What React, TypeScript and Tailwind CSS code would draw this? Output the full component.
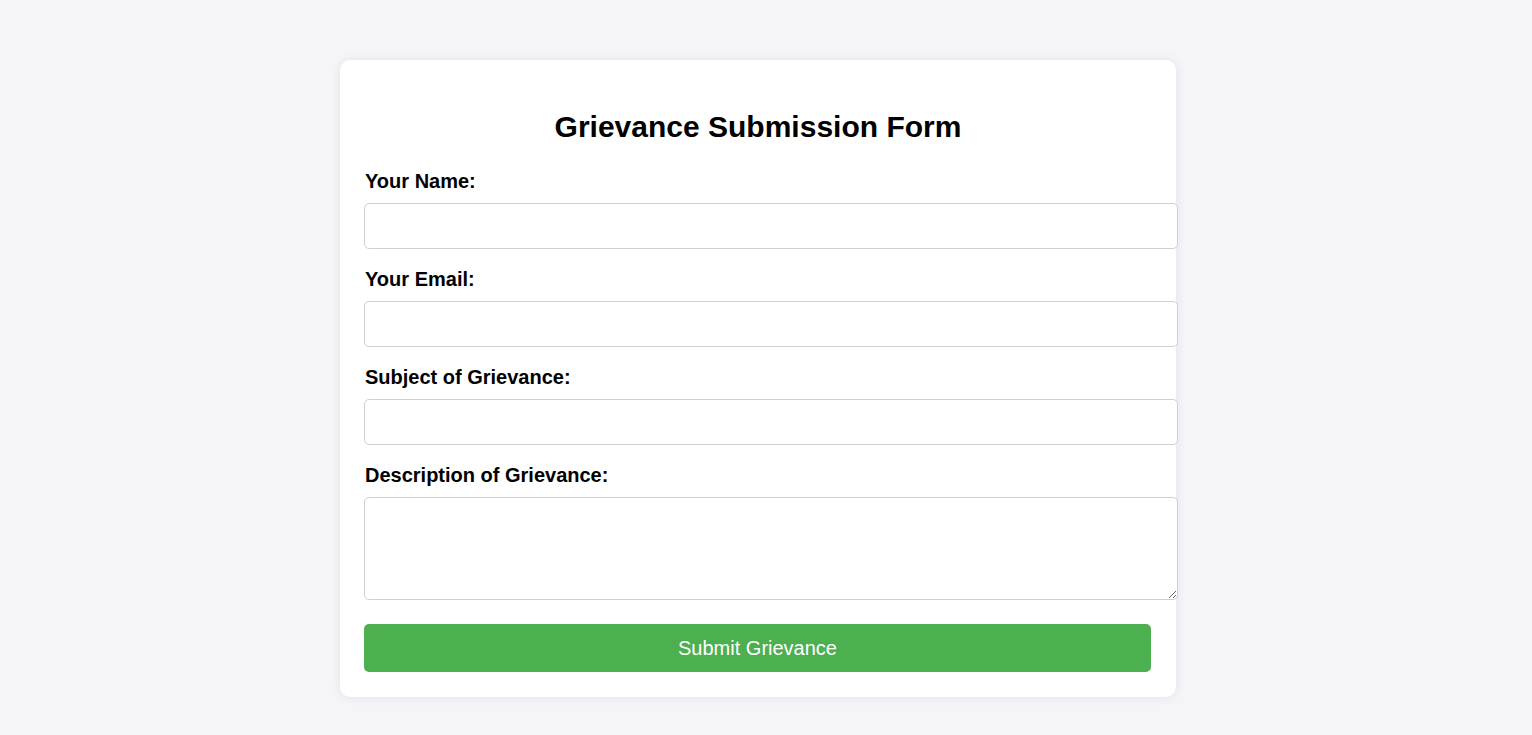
import React from "react";

export default function App() {
  const font = { fontFamily: '"Liberation Sans", Arial, sans-serif' };
  const fields = [
    { label: "Your Name:", type: "input" },
    { label: "Your Email:", type: "input" },
    { label: "Subject of Grievance:", type: "input" },
  ];
  return (
    <div className="min-h-[735px] w-full bg-[#f4f4f9] pt-[60px] pl-[340px]" style={font}>
      <div className="w-[836px] rounded-[10px] bg-white px-[24px] pt-[25px] pb-[25px] shadow-[0_0_12px_rgba(0,0,0,0.08)]">
        <h2 className="mt-[25px] mb-[26px] text-center text-[30px] leading-[34px] font-bold text-black">
          Grievance Submission Form
        </h2>
        {fields.map((f) => (
          <div key={f.label}>
            <label className="block text-[20px] leading-[23px] font-bold text-black ml-[1px]">{f.label}</label>
            <input
              type="text"
              className="mt-[10px] mb-[19px] block h-[46px] w-[814px] rounded-[5px] border border-[#cfcfcf] bg-white px-[12px] outline-none"
            />
          </div>
        ))}
        <label className="block text-[20px] leading-[23px] font-bold text-black ml-[1px]">Description of Grievance:</label>
        <textarea className="mt-[10px] block h-[103px] w-[814px] rounded-[5px] border border-[#cfcfcf] bg-white px-[12px] outline-none" />
        <button className="mt-[24px] flex h-[48px] w-[787px] items-center justify-center rounded-[5px] bg-[#4caf50] text-[20px] text-white">
          Submit Grievance
        </button>
      </div>
    </div>
  );
}
